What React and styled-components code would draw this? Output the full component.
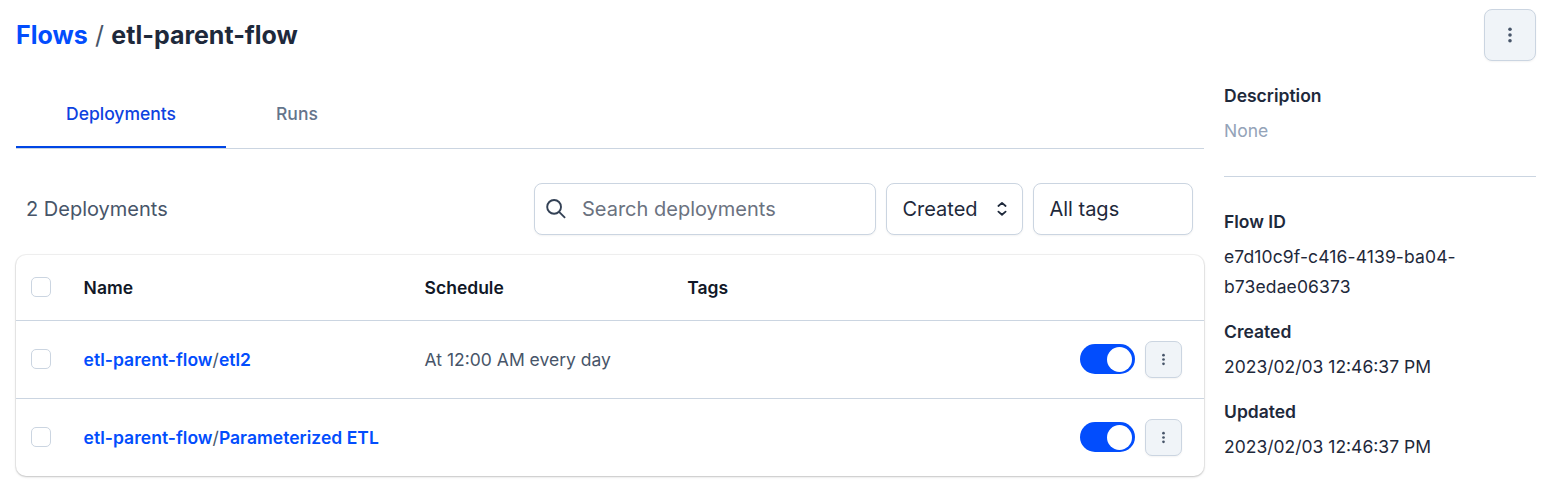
import React from "react";
import styled, { createGlobalStyle } from "styled-components";

const GlobalStyle = createGlobalStyle`
  * { box-sizing: border-box; }
  body {
    margin: 0;
    background: #fff;
    color: #1e293b;
    font-family: Inter, "Liberation Sans", sans-serif;
    font-size: 17.5px;
    line-height: 30px;
  }
  button, input { font: inherit; color: inherit; margin: 0; }
  a { text-decoration: none; }
`;

const Page = styled.div`
  width: 1548px;
  height: 500px;
  padding: 9px 12px 0 16px;
  overflow: hidden;
`;

const Header = styled.header`
  display: flex;
  align-items: center;
  justify-content: space-between;
  height: 52px;
  margin-bottom: 20px;
`;

const Breadcrumbs = styled.h1`
  margin: 0;
  display: flex;
  gap: 7.3px;
  font-size: 25px;
  font-weight: 700;
  line-height: 35px;
  color: #1e293b;
`;

const CrumbLink = styled.a`
  color: #024dfd;
`;

const CrumbDivider = styled.span`
  font-weight: 400;
  color: #475569;
`;

const IconButton = styled.button`
  display: flex;
  align-items: center;
  justify-content: center;
  width: ${(p) => p.$size}px;
  height: ${(p) => p.$size}px;
  padding: 0;
  border: 1px solid #cbd5e1;
  border-radius: ${(p) => (p.$size > 40 ? 8 : 7)}px;
  background: #f0f4f8;
  color: #475569;
  box-shadow: 0 1px 2px rgba(0, 0, 0, 0.05);
`;

const Columns = styled.div`
  display: grid;
  grid-template-columns: 1188px 312px;
  gap: 20px;
`;

const Tabs = styled.nav`
  display: flex;
  height: 68px;
  border-bottom: 1px solid #cbd5e1;
`;

const Tab = styled.a`
  display: flex;
  align-items: center;
  height: 67px;
  padding: 0 50px;
  font-weight: 500;
  color: ${(p) => (p.$active ? "#0d42df" : "#64748b")};
  border-bottom: 2px solid ${(p) => (p.$active ? "#0046e5" : "transparent")};
`;

const Toolbar = styled.div`
  display: flex;
  align-items: center;
  gap: 10px;
  margin-top: 34px;
  padding: 0 11px 0 10px;
  font-size: 20px;
`;

const Count = styled.div`
  flex: 1;
  color: #475569;
`;

const Field = styled.div`
  display: flex;
  align-items: center;
  justify-content: space-between;
  width: ${(p) => p.$width}px;
  height: 52px;
  padding: 0 14px 0 15.4px;
  border: 1px solid #cbd5e1;
  border-radius: 8px;
  background: #fff;
  box-shadow: 0 1px 2px rgba(0, 0, 0, 0.05);
`;

const SearchField = styled(Field)`
  justify-content: flex-start;
  gap: 13px;
  padding: 0 10px 0 9px;
`;

const SearchInput = styled.input`
  flex: 1;
  min-width: 0;
  padding: 0;
  border: 0;
  outline: 0;
  background: transparent;
  &::placeholder { color: #6b7280; opacity: 1; }
`;

const Table = styled.div`
  margin-top: 20px;
  border-radius: 10px;
  background: #fff;
  box-shadow: 0 0 0 1px rgba(0, 0, 0, 0.05), 0 1px 3px rgba(0, 0, 0, 0.1),
    0 1px 2px rgba(0, 0, 0, 0.1);
`;

const Row = styled.div`
  display: grid;
  grid-template-columns: 52.6px 341px 262.6px 1fr auto;
  align-items: center;
  height: ${(p) => (p.$head ? 66 : 78)}px;
  padding: 0 22px 0 15px;
  border-bottom: 1px solid #cbd5e1;
  color: ${(p) => (p.$head ? "#111827" : "#475569")};
  font-weight: ${(p) => (p.$head ? 600 : 400)};
  &:last-child { height: 77px; border-bottom: 0; }
`;

const Checkbox = styled.span`
  width: 20px;
  height: 20px;
  margin-bottom: 1px;
  border: 1px solid #cbd5e1;
  border-radius: 5px;
`;

const NameLink = styled.a`
  color: #024dfd;
  font-weight: 600;
  letter-spacing: 0.03px;
`;

const Actions = styled.div`
  display: flex;
  align-items: center;
  gap: 10px;
`;

const Switch = styled.span`
  display: flex;
  align-items: center;
  justify-content: flex-end;
  width: 55px;
  height: 30px;
  margin-bottom: 1px;
  padding-right: 3px;
  border-radius: 15px;
  background: #024dfd;
`;

const Knob = styled.span`
  width: 25px;
  height: 25px;
  border-radius: 50%;
  background: #fff;
`;

const Details = styled.dl`
  display: flex;
  flex-direction: column;
  gap: 15px;
  margin: 0;
`;

const Detail = styled.div`
  display: flex;
  flex-direction: column;
  gap: 5px;
`;

const Term = styled.dt`
  font-weight: 600;
`;

const Value = styled.dd`
  margin: 0;
  color: ${(p) => (p.$muted ? "#94a3b8" : "#1e293b")};
  letter-spacing: ${(p) => (p.$spaced ? "0.12px" : "normal")};
`;

const Divider = styled.hr`
  width: 100%;
  margin: 15px 0;
  border: 0;
  height: 1px;
  background: #cbd5e1;
`;

const Dots = ({ size }) => (
  <svg width={size} height={size} viewBox="0 0 20 20" fill="currentColor">
    <circle cx="10" cy="4.2" r="1.8" />
    <circle cx="10" cy="10" r="1.8" />
    <circle cx="10" cy="15.8" r="1.8" />
  </svg>
);

const SearchIcon = () => (
  <svg width="25" height="25" viewBox="0 0 25 25" fill="none" stroke="#334155" strokeWidth="1.9">
    <circle cx="10.1" cy="9.9" r="6.9" />
    <path d="M15.1 14.9 L21.1 20.9" />
  </svg>
);

const SelectorIcon = () => (
  <svg width="12" height="16" viewBox="0 0 12 16" fill="none" stroke="#1e293b" strokeWidth="1.8" strokeLinecap="round" strokeLinejoin="round">
    <path d="M2.4 5 L6 1.9 L9.6 5 M2.4 10.6 L6 13.7 L9.6 10.6" />
  </svg>
);

const deployments = [
  { name: "etl2", schedule: "At 12:00 AM every day" },
  { name: "Parameterized ETL", schedule: "" },
];

const details = [
  { term: "Flow ID", value: "e7d10c9f-c416-4139-ba04-b73edae06373", spaced: true },
  { term: "Created", value: "2023/02/03 12:46:37 PM" },
  { term: "Updated", value: "2023/02/03 12:46:37 PM" },
];

export default function App() {
  return (
    <Page>
      <GlobalStyle />
      <Header>
        <Breadcrumbs>
          <CrumbLink>Flows</CrumbLink>
          <CrumbDivider>/</CrumbDivider>
          <span>etl-parent-flow</span>
        </Breadcrumbs>
        <IconButton $size={52} aria-label="Flow menu">
          <Dots size={20} />
        </IconButton>
      </Header>
      <Columns>
        <main>
          <Tabs>
            <Tab $active>Deployments</Tab>
            <Tab>Runs</Tab>
          </Tabs>
          <Toolbar>
            <Count>2 Deployments</Count>
            <SearchField $width={342}>
              <SearchIcon />
              <SearchInput placeholder="Search deployments" />
            </SearchField>
            <Field $width={137}>
              Created
              <SelectorIcon />
            </Field>
            <Field $width={160}>All tags</Field>
          </Toolbar>
          <Table>
            <Row $head>
              <Checkbox />
              <span>Name</span>
              <span>Schedule</span>
              <span>Tags</span>
            </Row>
            {deployments.map((d) => (
              <Row key={d.name}>
                <Checkbox />
                <span>
                  <NameLink>etl-parent-flow</NameLink>/<NameLink>{d.name}</NameLink>
                </span>
                <span>{d.schedule}</span>
                <span />
                <Actions>
                  <Switch>
                    <Knob />
                  </Switch>
                  <IconButton $size={37} aria-label="Deployment menu">
                    <Dots size={15} />
                  </IconButton>
                </Actions>
              </Row>
            ))}
          </Table>
        </main>
        <aside>
          <Details>
            <Detail>
              <Term>Description</Term>
              <Value $muted>None</Value>
            </Detail>
            <Divider />
            {details.map(({ term, value, spaced }) => (
              <Detail key={term}>
                <Term>{term}</Term>
                <Value $spaced={spaced}>{value}</Value>
              </Detail>
            ))}
          </Details>
        </aside>
      </Columns>
    </Page>
  );
}
